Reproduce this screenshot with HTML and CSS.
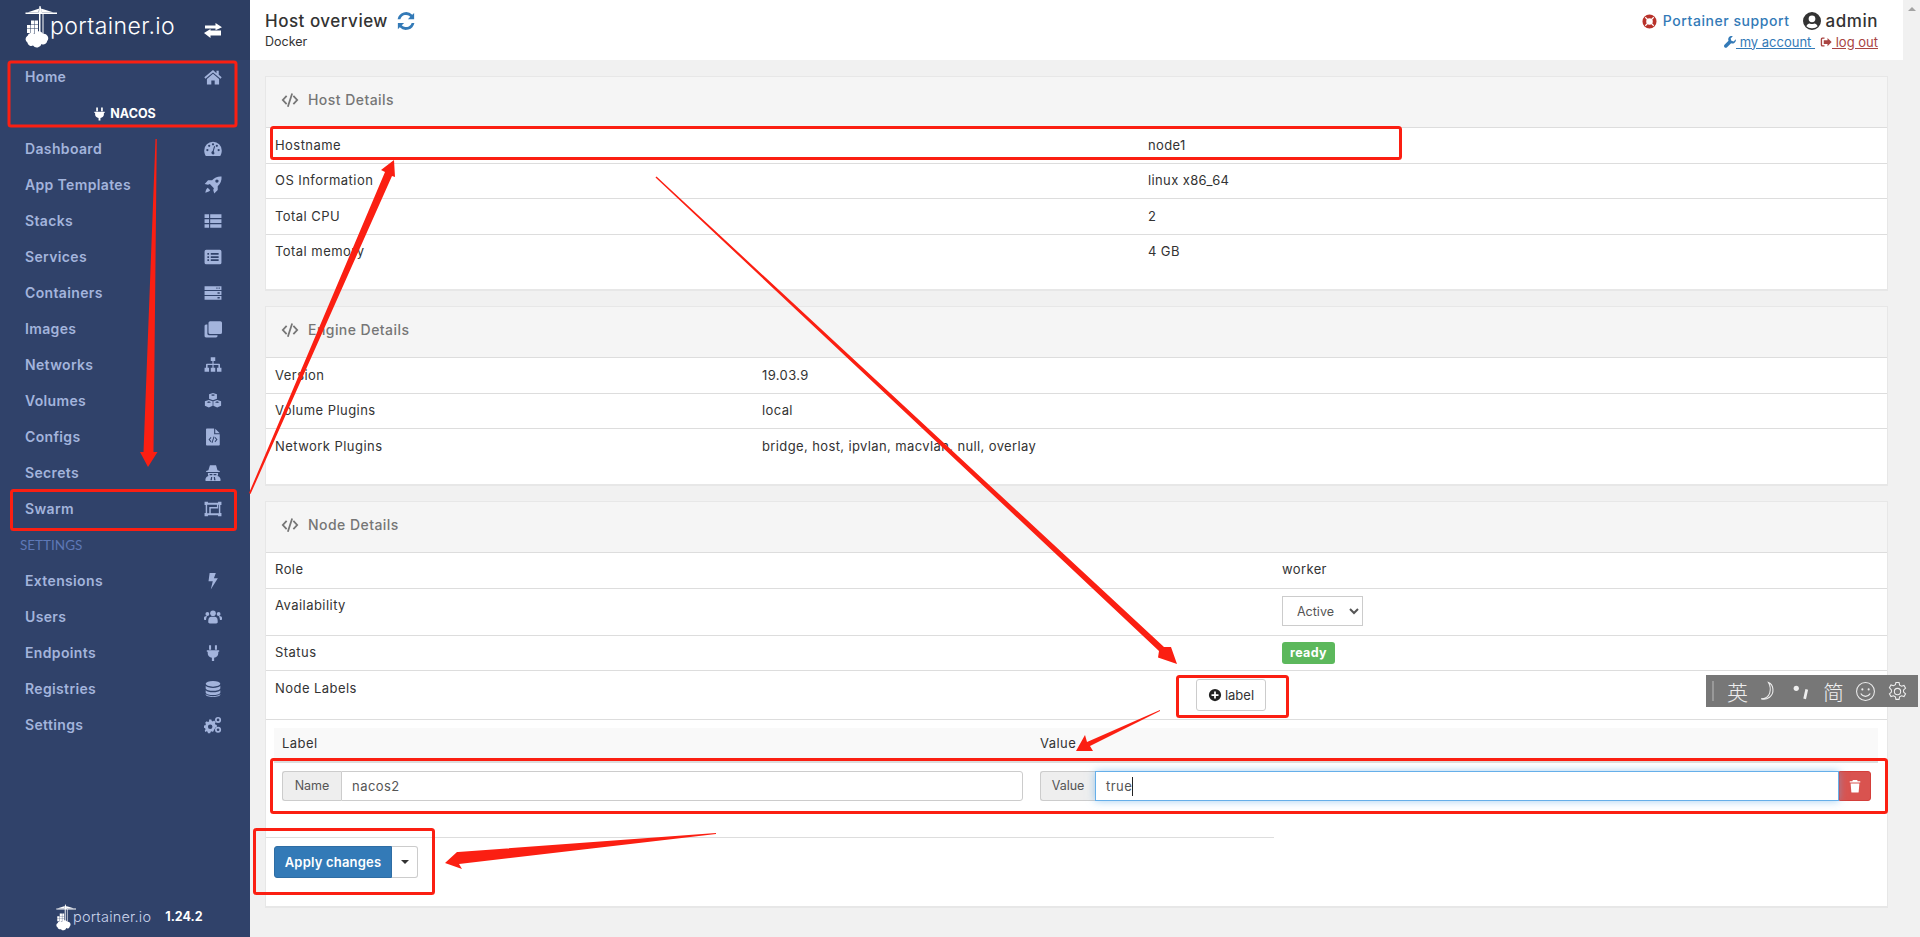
FILE: index.html
```html
<!DOCTYPE html>
<html lang="en">
<head>
<meta charset="utf-8">
<title>Host overview</title>
<link rel="stylesheet" href="styles.css">
</head>
<body>
<svg class="defs" width="0" height="0" aria-hidden="true">
  <symbol id="i-home" viewBox="0 0 16 16"><path d="M8 1.8.3 8.3l1 1.2L8 3.9l6.7 5.6 1-1.2-2.6-2.2V2.4h-2v2.2z"/><path d="M8 5.2 2.6 9.700v4.900h3.900v-3.500h3v3.500h3.900V9.700z"/></symbol>
  <symbol id="i-dash" viewBox="0 0 16 16"><path fill-rule="evenodd" d="M8 1.500A7.800 7.800 0 0 0 .2 9.300c0 1.800.5 3.300 1.200 4.600.2.300.5.400.8.400h11.600c.3 0 .6-.1.8-.4.7-1.300 1.200-2.800 1.200-4.600A7.800 7.800 0 0 0 8 1.500zM3 9.900a1 1 0 1 1 0-2 1 1 0 0 1 0 2zm1.600-3.700a1 1 0 1 1 0-2 1 1 0 0 1 0 2zM8 4.800a1 1 0 1 1 0-2 1 1 0 0 1 0 2zm1.200 7.700a1.600 1.600 0 0 1-2.600-1.200c0-.7.5-1.300 1.100-1.500l1.300-4.400.9.300-1.300 4.400c.5.500.7 1.600.6 2.400zM13 9.900a1 1 0 1 1 0-2 1 1 0 0 1 0 2zm-1.600-3.700a1 1 0 1 1 0-2 1 1 0 0 1 0 2z"/></symbol>
  <symbol id="i-rocket" viewBox="0 0 16 16"><path fill-rule="evenodd" d="M15.600.4c-3.400-.3-6.300 1-8.400 3.400H3.600L.6 7l3 .8 1.600-.6 3.600 3.600-.6 1.700.9 3 3.100-3V9C14.600 6.800 15.900 4 15.600.4zM11.500 6a1.500 1.500 0 1 1 0-3 1.500 1.500 0 0 1 0 3zM3.300 10.500C2 11.500 1.500 13 1.200 14.800c1.800-.3 3.300-.9 4.300-2.100z"/></symbol>
  <symbol id="i-thlist" viewBox="0 0 16 16"><path d="M.5 2h4v3.300h-4zM5.500 2h10v3.300h-10zM.5 6.400h4v3.300h-4zM5.500 6.400h10v3.300h-10zM.5 10.800h4v3.300h-4zM5.500 10.800h10v3.300h-10z"/></symbol>
  <symbol id="i-listalt" viewBox="0 0 16 16"><path fill-rule="evenodd" d="M2 1.500h12A1.500 1.500 0 0 1 15.500 3v10a1.500 1.500 0 0 1-1.500 1.500H2A1.500 1.500 0 0 1 .5 13V3A1.500 1.500 0 0 1 2 1.500zM3 4.500v1.500h1.500V4.500zM3 7.300v1.500h1.500V7.300zM3 10v1.500h1.500V10zM6 4.500v1.500h7V4.500zM6 7.300v1.500h7V7.300zM6 10v1.500h7V10z"/></symbol>
  <symbol id="i-server" viewBox="0 0 16 16"><path fill-rule="evenodd" d="M.5 2h15v3.400H.5zM11 3v1.300h1V3zM13 3v1.300h1V3zM.5 6.300h15v3.400H.5zM12 7.300v1.300h2V7.300zM.5 10.600h15V14H.5zM12 11.600v1.300h2v-1.300z"/></symbol>
  <symbol id="i-clone" viewBox="0 0 16 16"><path d="M5.500 1h9A1.500 1.500 0 0 1 16 2.500V11a1.500 1.500 0 0 1-1.500 1.500h-9A1.500 1.500 0 0 1 4 11V2.500A1.500 1.500 0 0 1 5.500 1z"/><path d="M3 4v8.200c0 .7.6 1.300 1.300 1.300H12v.8c0 .7-.6 1.200-1.300 1.200H1.800C1 15.500.5 15 .5 14.300V5.500C.5 4.700 1 4 1.800 4z"/></symbol>
  <symbol id="i-sitemap" viewBox="0 0 16 16"><path d="M6 1h4v3.500H8.500v2.300h5c.4 0 .7.3.7.7v3h1.300V14h-4v-3.500h1.300V8H8.500v2.500H10V14H6v-3.500h1.500V8H3.200v2.500h1.300V14h-4v-3.500h1.300v-3c0-.4.3-.7.7-.7h5V4.500H6z"/></symbol>
  <symbol id="i-cubes" viewBox="0 0 16 16"><path fill-rule="evenodd" d="M8 .8l3.500 1.300v3.800L8 7.300 4.500 5.900V2.100zM8 2l-2 .7 2 .8 2-.8zM4.300 7l3.400 1.300v4l-3.400 1.400L.8 12.300v-4zM4.300 8.200l-2 .8 2 .8 2-.8zM11.700 7l3.500 1.300v4l-3.500 1.400-3.400-1.400v-4zM11.700 8.200l-2 .8 2 .8 2-.8z"/></symbol>
  <symbol id="i-filecode" viewBox="0 0 16 16"><path fill-rule="evenodd" d="M2.500.5H9v5h5v9.300c0 .4-.3.7-.7.7H2.500c-.4 0-.7-.3-.7-.7V1.200c0-.4.3-.7.7-.7zM6 8l-2 2.300 2 2.300.6-.6-1.400-1.700 1.400-1.700zM10 8l-.6.6 1.400 1.700L9.400 12l.6.6 2-2.300zM8.500 7.600l-1.800 5.500.8.2 1.800-5.500z"/><path d="M10 .6l4 4h-4z"/></symbol>
  <symbol id="i-secret" viewBox="0 0 16 16"><path fill-rule="evenodd" d="M5.300 1h5.400L12 5.500l2 .8V7H1.900v-.7l2-.8zM3.500 8h9c.1 1.200-.1 2-.5 2.700 1.800.4 2.800 1.800 2.800 3.700 0 .4-.3.6-.6.6H1.800c-.3 0-.6-.2-.6-.6 0-1.900 1-3.300 2.800-3.700-.4-.7-.6-1.500-.5-2.700zM5 8.800v1.300h2.200l.4-1.300zM8.400 8.800l.4 1.300H11V8.800zM6.300 11.500l-.6 3H7l.3-3zM8.700 11.500l.3 3h1.300l-.6-3z"/></symbol>
  <symbol id="i-swarm" viewBox="0 0 16 16"><path fill-rule="evenodd" d="M.5 1.500h3v1h9v-1h3v3h-1v7h1v3h-3v-1h-9v1h-3v-3h1v-7h-1zM2.800 4.300v7.400h1.900V6.300h6.800V4.300zM6 7.500v4.200h7.200V4.300h-.6v3.200z"/></symbol>
  <symbol id="i-bolt" viewBox="0 0 16 16"><path d="M5 .8h5.500L8.800 5.500h3.500L6 15.500l1.800-7.300H4z"/></symbol>
  <symbol id="i-users" viewBox="0 0 16 16"><circle cx="8" cy="4.700" r="2.500"/><circle cx="3" cy="5.300" r="1.700"/><circle cx="13" cy="5.300" r="1.700"/><path d="M4.300 9.200c.5-1 1.500-1.400 3.700-1.400s3.200.4 3.700 1.400c.4.800.5 2.400.5 3.300 0 .9-.6 1.300-1.300 1.300H5.100c-.7 0-1.300-.4-1.300-1.300 0-.9.1-2.500.5-3.300zM0 8.800C0 7.800.5 7 2.900 7c-.8 1.100-1 2.300-1.100 3.700H.9c-.6 0-.9-.4-.9-.9zM16 8.800c0-1-.5-1.800-2.900-1.800.8 1.100 1 2.300 1.100 3.700h.9c.6 0 .9-.4.9-.9z"/></symbol>
  <symbol id="i-plug" viewBox="0 0 16 16"><path d="M4.500 1h1.800v4H4.500zM9.700 1h1.800v4H9.700zM2.500 5.500h11v1.300h-.8v1.500c0 2.200-1.500 3.700-3.700 4v2.700H7v-2.700c-2.200-.3-3.700-1.800-3.700-4V6.800h-.8z"/></symbol>
  <symbol id="i-db" viewBox="0 0 16 16"><ellipse cx="8" cy="3.400" rx="6.500" ry="2.500"/><path d="M1.500 5.200C2.500 6.500 5 7 8 7s5.500-.5 6.500-1.800v2.300C14 9 11 9.600 8 9.600S2 9 1.500 7.500zM1.500 9c1 1.300 3.500 1.900 6.500 1.900S13.500 10.300 14.500 9v2.300c-.5 1.500-3.500 2.100-6.500 2.100s-6-.6-6.500-2.100zM1.500 12.500c1 1.300 3.500 1.900 6.500 1.900s5.500-.6 6.500-1.900v.3c0 1.300-3 2.200-6.500 2.200s-6.500-.9-6.500-2.200z"/></symbol>
  <symbol id="i-cogs" viewBox="0 0 16 16"><path fill-rule="evenodd" d="M4.500 3h2l.3 1.300 1 .5L9 4.100l1.400 1.400-.7 1.100.4 1 1.300.3v2l-1.300.3-.4 1-.7 1.100L8 14.300l-1.100-.7-1 .4-.4 1.300h-2l-.3-1.300-1-.4-1.100.7L.7 12.900l.7-1.100-.4-1L0 10.500v-2l1.300-.3.4-1L1 6.100l1.400-1.400 1.100.7 1-.5zM5.500 7.500a2 2 0 1 0 0 4 2 2 0 0 0 0-4z"/><path fill-rule="evenodd" d="M12.500.8a2.700 2.700 0 1 1 0 5.400 2.700 2.700 0 0 1 0-5.400zM12.500 2.300a1.200 1.200 0 1 0 0 2.400 1.200 1.200 0 0 0 0-2.400zM12.500 9.500a2.700 2.700 0 1 1 0 5.400 2.700 2.700 0 0 1 0-5.400zM12.500 11a1.200 1.200 0 1 0 0 2.400 1.200 1.200 0 0 0 0-2.400z"/></symbol>
  <symbol id="i-code" viewBox="0 0 18 16"><path d="M5 3.200.6 8 5 12.800l1.300-1.200L3 8l3.300-3.600zM13 3.200l-1.300 1.200L15 8l-3.300 3.600 1.300 1.200L17.400 8zM10.300 1.200 6 14.400l1.700.5L12 1.700z"/></symbol>
  <symbol id="i-logo" viewBox="0 0 32 42">
    <path d="M14.500 0h1l1.500 6.500h15V8H18.500v23h-1V8H15.500v19h-1.500V8H.5V6.500h13zM14.300 2.500 3 6.300h11zM16 2.500 16.800 6.300 28 6.300z"/>
    <path d="M2 19h3.500v3.500H2zM6 19h3.500v3.500H6zM10 19h3v3.500h-3zM6 14.500h3.500v4H6zM10 14.500h3v4h-3zM2 23h3.500v4H2zM6 23h3.500v4H6zM10 23h3v4h-3z"/>
    <path d="M2.500 30a4.500 4.500 0 0 1 7-2.300 5 5 0 0 1 8.500 0 4.600 4.600 0 0 1 4.200 7.400 3.800 3.800 0 0 1-5.700 2.800 4.800 4.800 0 0 1-8.500 1.700 4 4 0 0 1-5.600-3 4 4 0 0 1-.2-6.600z"/>
  </symbol>
</svg>

<aside class="sidebar">
  <div class="brand">
    <svg class="brand-logo"><use href="#i-logo"/></svg>
    <span class="brand-name">portainer.io</span>
    <svg class="brand-swap" viewBox="0 0 18 15"><path d="M1 2.500h10.500V0L18 4.200l-6.500 3V5.500H1z" fill="#fff"/><path d="M17 7.500H6.500V6L0 10l6.500 5v-2.500H17z" fill="#fff"/></svg>
  </div>
  <nav class="nav">
    <a class="nav-item"><span>Home</span><svg class="nav-icon"><use href="#i-home"/></svg></a>
    <div class="nav-endpoint"><svg class="plug"><use href="#i-plug"/></svg><span>NACOS</span></div>
    <a class="nav-item"><span>Dashboard</span><svg class="nav-icon"><use href="#i-dash"/></svg></a>
    <a class="nav-item"><span>App Templates</span><svg class="nav-icon"><use href="#i-rocket"/></svg></a>
    <a class="nav-item"><span>Stacks</span><svg class="nav-icon"><use href="#i-thlist"/></svg></a>
    <a class="nav-item"><span>Services</span><svg class="nav-icon"><use href="#i-listalt"/></svg></a>
    <a class="nav-item"><span>Containers</span><svg class="nav-icon"><use href="#i-server"/></svg></a>
    <a class="nav-item"><span>Images</span><svg class="nav-icon"><use href="#i-clone"/></svg></a>
    <a class="nav-item"><span>Networks</span><svg class="nav-icon"><use href="#i-sitemap"/></svg></a>
    <a class="nav-item"><span>Volumes</span><svg class="nav-icon"><use href="#i-cubes"/></svg></a>
    <a class="nav-item"><span>Configs</span><svg class="nav-icon"><use href="#i-filecode"/></svg></a>
    <a class="nav-item"><span>Secrets</span><svg class="nav-icon"><use href="#i-secret"/></svg></a>
    <a class="nav-item"><span>Swarm</span><svg class="nav-icon"><use href="#i-swarm"/></svg></a>
    <div class="nav-title">SETTINGS</div>
    <a class="nav-item"><span>Extensions</span><svg class="nav-icon"><use href="#i-bolt"/></svg></a>
    <a class="nav-item"><span>Users</span><svg class="nav-icon"><use href="#i-users"/></svg></a>
    <a class="nav-item"><span>Endpoints</span><svg class="nav-icon"><use href="#i-plug"/></svg></a>
    <a class="nav-item"><span>Registries</span><svg class="nav-icon"><use href="#i-db"/></svg></a>
    <a class="nav-item"><span>Settings</span><svg class="nav-icon"><use href="#i-cogs"/></svg></a>
  </nav>
  <div class="side-foot">
    <svg class="foot-logo"><use href="#i-logo"/></svg>
    <span class="foot-name">portainer.io</span>
    <span class="foot-ver">1.24.2</span>
  </div>
</aside>

<div class="page">
  <header class="topbar">
    <div class="crumb">
      <div class="crumb-title">Host overview
        <svg class="refresh" viewBox="0 0 16 16"><path d="M14.500 1.500v5h-5l1.900-1.900A4.700 4.700 0 0 0 3.500 6.500H1.300A6.900 6.900 0 0 1 13 3zM1.500 14.500v-5h5l-1.900 1.900a4.700 4.700 0 0 0 7.900-1.900h2.200A6.900 6.900 0 0 1 3 13z"/></svg>
      </div>
      <div class="crumb-sub">Docker</div>
    </div>
    <div class="account">
      <div class="account-top">
        <svg class="support-icon" viewBox="0 0 16 16"><circle cx="8" cy="8" r="5.500" fill="none" stroke="#b8322a" stroke-width="4"/><path d="M3.500 3.500 6 6M12.500 3.500 10 6M3.500 12.500 6 10M12.500 12.500 10 10" stroke="#fff" stroke-width="1.300"/></svg>
        <a class="support-link">Portainer support</a>
        <svg class="user-icon" viewBox="0 0 16 16"><path fill-rule="evenodd" d="M8 0a8 8 0 1 1 0 16A8 8 0 0 1 8 0zm0 3a3 3 0 1 0 0 6 3 3 0 0 0 0-6zM3 12.700a6.500 6.500 0 0 0 5 1.800 6.500 6.500 0 0 0 5-1.800c-.5-1.500-1.700-2.500-3-2.500-.6.3-1.300.5-2 .5s-1.400-.2-2-.5c-1.300 0-2.500 1-3 2.500z"/></svg>
        <span class="user-name">admin</span>
      </div>
      <div class="account-bottom">
        <a class="link-account"><svg class="mini" viewBox="0 0 16 16"><path d="M15.700 4.300 12.800 7.200l-3-1-1-3L11.700.3C9.500-.4 7 .5 6 2.500c-.6 1.300-.5 2.700 0 3.800L.7 11.700c-.9.900-.9 2.400 0 3.400s2.500.9 3.400 0l5.400-5.400c1.100.5 2.500.6 3.800 0 2-1 2.900-3.200 2.400-5.400z"/></svg> my account </a>
        <a class="link-logout"><svg class="mini" viewBox="0 0 16 16"><path d="M6 2H3a2 2 0 0 0-2 2v8a2 2 0 0 0 2 2h3v-1.800H3.500c-.4 0-.7-.3-.7-.7v-7c0-.4.3-.7.7-.7H6zM10 2.500v3H5v5h5v3L15.500 8z"/></svg> log out</a>
      </div>
    </div>
  </header>

  <main class="content">
    <section class="panel">
      <h2 class="panel-head"><svg class="code"><use href="#i-code"/></svg>Host Details</h2>
      <table class="kv">
        <colgroup><col class="col-host"><col></colgroup>
        <tr><td>Hostname</td><td>node1</td></tr>
        <tr><td>OS Information</td><td>linux x86_64</td></tr>
        <tr><td>Total CPU</td><td>2</td></tr>
        <tr><td>Total memory</td><td>4 GB</td></tr>
      </table>
    </section>

    <section class="panel">
      <h2 class="panel-head"><svg class="code"><use href="#i-code"/></svg>Engine Details</h2>
      <table class="kv">
        <colgroup><col class="col-engine"><col></colgroup>
        <tr><td>Version</td><td>19.03.9</td></tr>
        <tr><td>Volume Plugins</td><td>local</td></tr>
        <tr><td>Network Plugins</td><td>bridge, host, ipvlan, macvlan, null, overlay</td></tr>
      </table>
    </section>

    <section class="panel panel-last">
      <h2 class="panel-head"><svg class="code"><use href="#i-code"/></svg>Node Details</h2>
      <table class="kv kv-node">
        <colgroup><col class="col-node"><col></colgroup>
        <tr><td>Role</td><td>worker</td></tr>
        <tr><td>Availability</td><td><select class="avail"><option>Active</option></select></td></tr>
        <tr><td>Status</td><td><span class="badge">ready</span></td></tr>
        <tr><td>Node Labels</td><td><button class="add-label"><svg viewBox="0 0 16 16"><path fill-rule="evenodd" d="M8 1a7 7 0 1 1 0 14A7 7 0 0 1 8 1zM7 4v3H4v2h3v3h2V9h3V7H9V4z"/></svg> label</button></td></tr>
      </table>
      <div class="labels">
        <div class="labels-head"><span class="lh-a">Label</span><span class="lh-b">Value</span></div>
        <div class="labels-row">
          <div class="group group-name"><span class="addon">Name</span><div class="input">nacos2</div></div>
          <div class="group group-value"><span class="addon">Value</span><div class="input input-focus">true<i class="cursor"></i></div><button class="del"><svg viewBox="0 0 16 16"><path d="M5.500 1h5l.5 1.500h3V4H2V2.500h3zM3 5h10l-.8 9.800c0 .3-.3.7-.7.7h-7c-.4 0-.7-.4-.7-.7z"/></svg></button></div>
        </div>
      </div>
      <hr class="rule">
      <div class="actions">
        <button class="apply">Apply changes</button><button class="apply-caret"><i></i></button>
      </div>
    </section>
  </main>
</div>

<div class="scrollbar"><i></i></div>

<div class="ime">
  <span class="ime-grip"></span>
  <span class="ime-ch">英</span>
  <svg class="ime-ic" viewBox="0 0 20 20"><path d="M9 1.500c5 2 6 10 1 14-2 1.500-5 2.500-8 1.500 4 0 7-2 8.200-5.500C11.200 8 10.500 4 9 1.500z" fill="none" stroke="#eee"/></svg>
  <svg class="ime-ic" viewBox="0 0 20 20"><circle cx="5" cy="7" r="2.500" fill="#eee"/><path d="M15 8l-2 9" stroke="#eee" stroke-width="2.600"/></svg>
  <span class="ime-ch">简</span>
  <svg class="ime-ic" viewBox="0 0 20 20"><circle cx="10" cy="10" r="8.500" fill="none" stroke="#eee"/><circle cx="7" cy="8" r="1" fill="#eee"/><circle cx="13" cy="8" r="1" fill="#eee"/><path d="M5.500 12c2 3.500 7 3.500 9 0" fill="none" stroke="#eee"/></svg>
  <svg class="ime-ic" viewBox="0 0 20 20"><circle cx="10" cy="10" r="3" fill="none" stroke="#eee"/><path d="M8.500 1.500h3l.5 2.500 1.800 1 2.400-.8 1.500 2.600-1.900 1.700v2l1.900 1.700-1.500 2.600-2.400-.8-1.800 1-.5 2.500h-3l-.5-2.500-1.800-1-2.400.8-1.500-2.600 1.900-1.700v-2L2.300 6.300l1.500-2.600 2.400.8 1.800-1z" fill="none" stroke="#eee"/></svg>
</div>

<svg class="notes" viewBox="0 0 1920 937" aria-hidden="true">
  <g class="note-box">
    <rect x="9" y="62" width="227" height="64" rx="2"/>
    <rect x="11.500" y="490.500" width="224" height="39" rx="2"/>
    <rect x="271.500" y="127.500" width="1129" height="31" rx="2"/>
    <rect x="1177.500" y="676.500" width="110" height="40" rx="2"/>
    <rect x="271.500" y="759.500" width="1615" height="53" rx="2"/>
    <rect x="254.500" y="829.500" width="179" height="64" rx="2"/>
  </g>
  <g class="note-arrow">
    <polygon points="156.800,139 153.500,452 157.500,452 148,467 140,452 143.500,452 155.500,139"/>
    <polygon points="249,493 385,172 381,170 394,160 395,177 392,176 250.500,494"/>
    <polygon points="655.500,177.500 656.500,176.500 1164,647 1171,647 1177,664 1158,657.500 1159,651"/>
    <polygon points="1160,710 1087,742 1085,735 1076,751 1093,751 1090,746 1160,711"/>
    <polygon points="716,833 458,852 457,852 445,863 462,869 459,864 716,834"/>
  </g>
</svg>
</body>
</html>
```

FILE: styles.css
```css
* { box-sizing: border-box; }
html, body { margin: 0; height: 937px; overflow: hidden; }
body {
  position: relative;
  display: flex;
  font-family: Inter, "Noto Sans", sans-serif;
  font-size: 13px;
  line-height: 1.42857;
  color: #333;
  background: #f1f1f1;
}
.defs { position: absolute; }

/* sidebar */
.sidebar {
  width: 250px;
  flex: none;
  height: 937px;
  background: #30426a;
  display: flex;
  flex-direction: column;
}
.brand {
  height: 60px;
  flex: none;
  background: #2d3e63;
  display: flex;
  align-items: center;
  padding: 0 28px 0 25px;
  margin-bottom: -1px;
  position: relative;
  color: #fff;
}
.brand-logo { width: 32px; height: 42px; fill: #fff; flex: none; margin-right: -7px; margin-top: -6px; }
.brand-name { font-size: 23px; font-weight: 300; margin-top: -7px; letter-spacing: .4px; }
.brand-swap { width: 18px; height: 15px; margin-left: auto; margin-top: 1px; }
.nav { display: flex; flex-direction: column; flex: 1; }
.nav-item {
  height: 36px;
  flex: none;
  display: flex;
  align-items: center;
  justify-content: space-between;
  padding: 0 28px 0 25px;
  font-size: 14px;
  font-weight: 600;
  letter-spacing: .35px;
  color: #a3b4dc;
}
.nav-icon { width: 18px; height: 18px; fill: currentColor; }
.nav-endpoint {
  height: 36px;
  flex: none;
  display: flex;
  align-items: center;
  justify-content: center;
  gap: 3px;
  color: #fff;
  font-size: 12.500px;
  font-weight: 700;
  padding: 2px 2px 0 0;
}
.plug { width: 15px; height: 16px; fill: #fff; }
.nav-title {
  height: 36px;
  flex: none;
  display: flex;
  align-items: center;
  padding: 2px 0 0 20px;
  font-family: Lato, sans-serif;
  font-size: 13.500px;
  color: #5e78b6;
}
.side-foot {
  height: 40px;
  flex: none;
  display: flex;
  align-items: center;
  padding-left: 56px;
  color: #c9d3ea;
}
.foot-logo { width: 20px; height: 27px; fill: #fff; flex: none; }
.foot-name { font-size: 14.500px; font-weight: 300; margin-left: -3px; letter-spacing: .2px; }
.foot-ver { font-size: 12.500px; font-weight: 700; color: #fff; margin-left: 14px; }

/* page */
.page { flex: 1; min-width: 0; display: flex; flex-direction: column; }
.topbar {
  height: 60px;
  flex: none;
  background: #fff;
  display: flex;
  justify-content: space-between;
  padding: 11px 25px 0 15px;
}
.crumb-title { font-size: 17px; font-weight: 500; line-height: 20px; letter-spacing: .5px; display: flex; align-items: center; gap: 8px; }
.refresh { width: 20px; height: 20px; fill: #337ab7; }
.crumb-sub { font-size: 12.500px; line-height: 20px; margin-top: 1px; }
.account { display: flex; flex-direction: column; align-items: flex-end; }
.account-top { display: flex; align-items: center; height: 20px; }
.support-icon { width: 15px; height: 15px; margin-right: 6px; }
.support-link { color: #337ab7; font-size: 14px; font-weight: 500; letter-spacing: .55px; }
.user-icon { width: 18px; height: 18px; fill: #333; margin-left: 14px; margin-right: 4px; }
.user-name { font-size: 17px; font-weight: 500; letter-spacing: .55px; }
.account-bottom { display: flex; height: 20px; align-items: center; gap: 5px; font-size: 13px; margin-top: 1px; }
.link-account { color: #337ab7; text-decoration: underline; white-space: pre; }
.link-logout { color: #a94442; text-decoration: underline; white-space: pre; }
.mini { width: 12px; height: 12px; fill: currentColor; vertical-align: -1px; }

.content { padding: 16px 15px 0; display: flex; flex-direction: column; gap: 15px; }
.panel { background: #fff; border: 1px solid #e7e7e7; border-bottom-width: 2px; }
.panel-head {
  margin: 0;
  height: 51px;
  display: flex;
  align-items: center;
  gap: 9px;
  padding: 0 0 4px 15px;
  background: #f5f5f5;
  border-bottom: 1px solid #ddd;
  font-size: 14px;
  font-weight: 500;
  color: #767676;
  letter-spacing: .45px;
}
.code { width: 18px; height: 16px; fill: #767676; }
.kv { width: 100%; border-collapse: collapse; margin-bottom: 20px; table-layout: fixed; letter-spacing: .45px; }
.kv td { padding: 7.500px 9px 8.500px; border-top: 1px solid #ddd; vertical-align: top; }
.kv td + td { letter-spacing: .38px; }
.kv tr:first-child td { border-top: 0; }
.col-host { width: 873px; }
.col-engine { width: 487px; }
.col-node { width: 1007px; }
.kv-node { margin-bottom: 0; border-bottom: 1px solid #ddd; }
.avail {
  display: block;
  width: 81px;
  height: 30px;
  background: #fff;
  border: 1px solid #ccc;
  font: 12.500px Inter, sans-serif;
  color: #555;
  padding: 0 5px 0 10px;
}
.badge {
  display: block;
  width: 53px;
  height: 22px;
  line-height: 21px;
  margin: -1px 0 -2.430px;
  text-align: center;
  background: #5cb85c;
  color: #fff;
  border-radius: 3px;
  font-size: 12.500px;
  font-weight: 700;
}
.add-label {
  margin-left: -86px;
  width: 70px;
  height: 32px;
  display: flex;
  align-items: center;
  justify-content: center;
  gap: 3px;
  background: #fff;
  border: 1px solid #ccc;
  border-radius: 3px;
  font: 13px Inter, sans-serif;
  color: #333;
  padding: 0;
}
.add-label svg { width: 14px; height: 14px; fill: #222; }
.labels { padding: 8px 9px 0 8px; }
.labels-head { height: 35px; display: flex; background: #f9f9f9; border-bottom: 2px solid #ddd; align-items: center; padding: 0 0 3px 8px; letter-spacing: .45px; }
.lh-a { width: 758px; }
.labels-row { display: flex; padding: 8px 7px 0 8px; height: 47px; }
.group { display: flex; height: 30px; }
.group-name { width: 741px; margin-right: 17px; }
.group-value { flex: 1; min-width: 0; }
.addon { display: flex; align-items: center; justify-content: center; flex: none; background: #eee; border: 1px solid #ccc; border-right: 0; border-radius: 3px 0 0 3px; color: #555; font-size: 12.500px; padding: 0 10px; }
.group-name .addon { width: 59px; }
.group-value .addon { width: 55px; }
.input { flex: 1; min-width: 0; display: flex; align-items: center; border: 1px solid #ccc; border-radius: 0 3px 3px 0; background: #fff; color: #555; padding: 0 10px; letter-spacing: .45px; }
.input-focus { border-color: #66afe9; border-radius: 0; box-shadow: 0 0 8px rgba(102,175,233,.6); position: relative; z-index: 1; }
.cursor { width: 1px; height: 19px; background: #222; }
.del { flex: none; width: 32px; height: 30px; background: #d9534f; border: 1px solid #d43f3a; border-radius: 0 3px 3px 0; padding: 0; display: flex; align-items: center; justify-content: center; }
.del svg { width: 14px; height: 14px; fill: #fff; }
.rule { width: 1008px; margin: 27px 0 0 0; border: 0; border-top: 1px solid #ddd; }
.actions { display: flex; padding: 8px 0 28px 8px; }
.apply { width: 118px; height: 32px; background: #337ab7; border: 1px solid #2e6da4; border-radius: 3px 0 0 3px; color: #fff; font: 600 13px Inter, sans-serif; letter-spacing: .2px; padding: 0; }
.apply-caret { width: 26px; height: 32px; background: #fff; border: 1px solid #ccc; border-left: 0; border-radius: 0 3px 3px 0; padding: 0; display: flex; align-items: center; justify-content: center; }
.apply-caret i { width: 0; height: 0; border: 4px solid transparent; border-top-color: #333; border-bottom: 0; }
.scrollbar { width: 17px; flex: none; display: flex; justify-content: center; padding-top: 7px; }
.scrollbar i { width: 0; height: 0; border: 4px solid transparent; border-bottom: 4px solid #a3a3a3; border-top: 0; }

/* floating input-method toolbar */
.ime { position: absolute; left: 1706px; top: 675px; width: 212px; height: 32px; background: #777; color: #eee; display: flex; align-items: center; padding-left: 6px; font-family: "Noto Sans CJK SC", sans-serif; font-size: 21px; font-weight: 300; }
.ime-grip { width: 3px; height: 20px; border-left: 1px solid #999; border-right: 1px solid #999; margin-right: 13px; }
.ime-ch { line-height: 1; width: 32px; flex: none; }
.ime-ic { width: 21px; height: 21px; margin-right: 11px; flex: none; }

/* hand-drawn annotations over the screenshot */
.notes { position: absolute; left: 0; top: 0; width: 1920px; height: 937px; pointer-events: none; z-index: 5; }
.note-box rect { fill: none; stroke: #fb1f12; stroke-width: 3; }
.note-arrow polygon { fill: #fb1f12; }
```
